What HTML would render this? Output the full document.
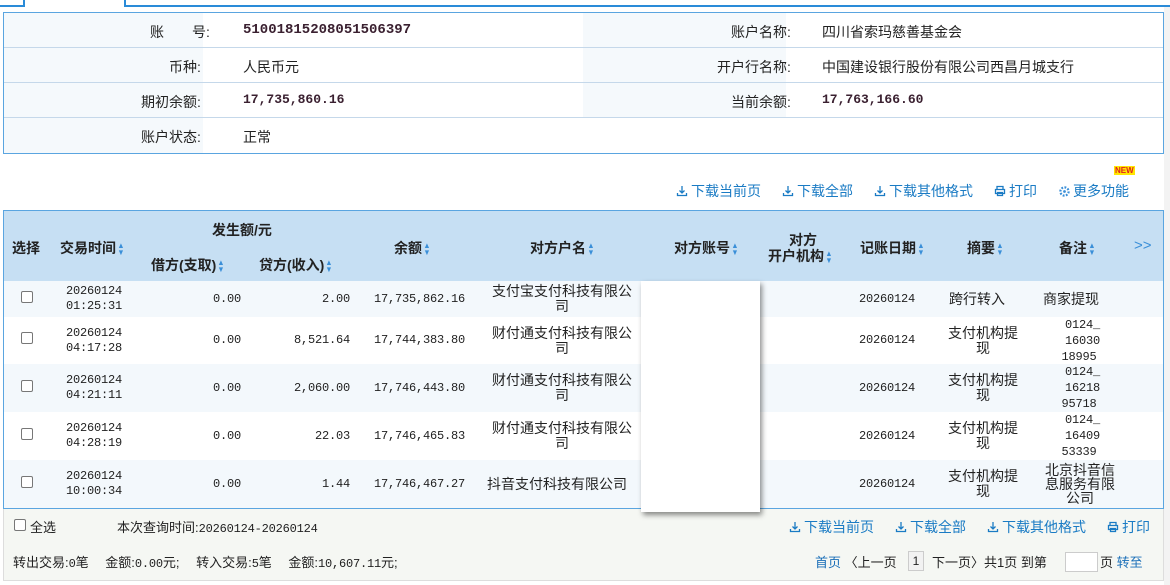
<!DOCTYPE html>
<html><head><meta charset="utf-8"><style>
*{margin:0;padding:0;box-sizing:border-box}
body{width:1170px;height:585px;position:relative;overflow:hidden;background:#fff;font-family:"Liberation Sans","Noto Sans CJK SC",sans-serif;font-size:14px;color:#222}
.a{position:absolute;white-space:nowrap}
.m{font-family:"Liberation Mono","Noto Sans CJK SC",monospace;font-size:12px;letter-spacing:-0.2px}
.lb{background:#f5f9fc}
.hl{position:absolute;height:1px;background:#c5d8ea}
.row{position:absolute;left:4px;width:1159px}
.c{position:absolute;top:0;height:100%;display:flex;align-items:center;line-height:15px}
.cb{position:absolute;width:12px;height:12px;border:1px solid #777;border-radius:2px;background:#fff}
.h{font-weight:bold;color:#222;font-size:14px}
.s{display:inline-flex;flex-direction:column;vertical-align:middle;color:#3a8fd8;font-size:8px;line-height:7px;margin-left:1px;transform:scaleX(0.9)}
.lk{color:#1a7bc4;font-size:14px}
.ic{display:inline-block;vertical-align:-1px;margin-right:3px}
</style></head><body>
<svg width="0" height="0" style="position:absolute"><defs>
<symbol id="dl" viewBox="0 0 12 12"><path d="M6 1v7M3.5 5.5L6 8l2.5-2.5M1.5 8v2.5h9V8" fill="none" stroke="#1a7bc4" stroke-width="1.3"/></symbol>
<symbol id="pr" viewBox="0 0 12 12"><path d="M3 4V1.5h6V4M1.5 4.5h9v4h-9zM3.5 7.5h5v3h-5z" fill="none" stroke="#1a7bc4" stroke-width="1.3"/></symbol>
</defs></svg>
<!-- tab -->
<div class="a" style="left:0;top:5px;width:24px;height:2px;background:#2a8bd8"></div>
<div class="a" style="left:23px;top:0;width:2px;height:7px;background:#2a8bd8"></div>
<div class="a" style="left:124px;top:0;width:2px;height:7px;background:#2a8bd8"></div>
<div class="a" style="left:124px;top:5px;width:1046px;height:2px;background:#2a8bd8"></div>
<div class="a" style="left:1164px;top:7px;width:6px;height:578px;background:#f3f3f3"></div>
<!-- info box -->
<div class="a" style="left:3px;top:12px;width:1161px;height:142px;border:1px solid #5aa5e0"></div>
<div class="a lb" style="left:4px;top:13px;width:199px;height:140px"></div>
<div class="a lb" style="left:583px;top:13px;width:203px;height:105px"></div>
<div class="hl" style="left:4px;top:47px;width:1159px"></div>
<div class="hl" style="left:4px;top:82px;width:1159px"></div>
<div class="hl" style="left:4px;top:117px;width:1159px"></div>
<div class="a" style="left:150px;top:22px">账　　号:</div>
<div class="a m" style="left:243px;top:22px;font-weight:bold;color:#3a2030;font-size:14px;letter-spacing:0">5100181520805150639​7</div>
<div class="a" style="left:169px;top:57px">币种:</div>
<div class="a" style="left:243px;top:57px">人民币元</div>
<div class="a" style="left:141px;top:92px">期初余额:</div>
<div class="a m" style="left:243px;top:92px;font-weight:bold;color:#3a2030;font-size:13px;letter-spacing:0">17,735,860.16</div>
<div class="a" style="left:141px;top:127px">账户状态:</div>
<div class="a" style="left:243px;top:127px">正常</div>
<div class="a" style="left:731px;top:22px">账户名称:</div>
<div class="a" style="left:822px;top:22px">四川省索玛慈善基金会</div>
<div class="a" style="left:717px;top:57px">开户行名称:</div>
<div class="a" style="left:822px;top:57px">中国建设银行股份有限公司西昌月城支行</div>
<div class="a" style="left:731px;top:92px">当前余额:</div>
<div class="a m" style="left:822px;top:92px;font-weight:bold;color:#3a2030;font-size:13px;letter-spacing:0">17,763,166.60</div>
<!-- toolbar -->
<div class="a lk" style="left:676px;top:181px"><svg class="ic" width="12" height="12"><use href="#dl"/></svg>下载当前页</div>
<div class="a lk" style="left:782px;top:181px"><svg class="ic" width="12" height="12"><use href="#dl"/></svg>下载全部</div>
<div class="a lk" style="left:874px;top:181px"><svg class="ic" width="12" height="12"><use href="#dl"/></svg>下载其他格式</div>
<div class="a lk" style="left:994px;top:181px"><svg class="ic" width="12" height="12"><use href="#pr"/></svg>打印</div>
<div class="a lk" style="left:1059px;top:181px"><svg class="ic" width="11" height="11" viewBox="0 0 12 12"><circle cx="6" cy="6" r="4.5" fill="none" stroke="#3a8fd8" stroke-width="2.4" stroke-dasharray="2 1.5"/><circle cx="6" cy="6" r="1.5" fill="#3a8fd8"/></svg>更多功能</div>
<div class="a" style="left:1114px;top:166px;font-size:8px;font-weight:bold;color:#e02020;background:#ffe600;line-height:9px;padding:0 1px">NEW</div>
<!-- table -->
<div class="a" style="left:3px;top:210px;width:1161px;height:299px;border:1px solid #5aa5e0"></div>
<div class="a" style="left:4px;top:211px;width:1159px;height:70px;background:#c6dff3"></div>
<div class="a h" style="left:12px;top:238px">选择</div>
<div class="a h" style="left:60px;top:238px">交易时间<span class="s"><i>▲</i><i>▼</i></span></div>
<div class="a h" style="left:212px;top:220px">发生额/元</div>
<div class="a h" style="left:151px;top:255px">借方(支取)<span class="s"><i>▲</i><i>▼</i></span></div>
<div class="a h" style="left:259px;top:255px">贷方(收入)<span class="s"><i>▲</i><i>▼</i></span></div>
<div class="a h" style="left:394px;top:238px">余额<span class="s"><i>▲</i><i>▼</i></span></div>
<div class="a h" style="left:530px;top:238px">对方户名<span class="s"><i>▲</i><i>▼</i></span></div>
<div class="a h" style="left:674px;top:238px">对方账号<span class="s"><i>▲</i><i>▼</i></span></div>
<div class="a h" style="left:789px;top:230px">对方</div>
<div class="a h" style="left:768px;top:246px">开户机构<span class="s"><i>▲</i><i>▼</i></span></div>
<div class="a h" style="left:860px;top:238px">记账日期<span class="s"><i>▲</i><i>▼</i></span></div>
<div class="a h" style="left:967px;top:238px">摘要<span class="s"><i>▲</i><i>▼</i></span></div>
<div class="a h" style="left:1059px;top:238px">备注<span class="s"><i>▲</i><i>▼</i></span></div>
<div class="a" style="left:1134px;top:237px;color:#3a8fd8;font-size:15px">&gt;&gt;</div>

<div class="row" style="top:281px;height:36px;background:#f3f8fc">
<div class="cb" style="left:17px;top:10px"></div>
<div class="c m" style="left:62px">20260124<br>01:25:31</div>
<div class="c m" style="right:922px">0.00</div>
<div class="c m" style="right:813px">2.00</div>
<div class="c m" style="right:698px">17,735,862.16</div>
<div class="c" style="left:487px;width:142px;justify-content:center;text-align:center;white-space:normal">支付宝支付科技有限公司</div>
<div class="c m" style="left:855px">20260124</div>
<div class="c" style="left:945px">跨行转入</div>
<div class="c" style="left:1039px">商家提现</div>
</div>
<div class="row" style="top:317px;height:47px;background:#fff">
<div class="cb" style="left:17px;top:15px"></div>
<div class="c m" style="left:62px">20260124<br>04:17:28</div>
<div class="c m" style="right:922px">0.00</div>
<div class="c m" style="right:813px">8,521.64</div>
<div class="c m" style="right:698px">17,744,383.80</div>
<div class="c" style="left:487px;width:142px;justify-content:center;text-align:center;white-space:normal">财付通支付科技有限公司</div>
<div class="c m" style="left:855px">20260124</div>
<div class="c" style="left:944px;width:70px;text-align:center;white-space:normal">支付机构提现</div>
<div class="c m" style="left:1037px;width:76px;justify-content:center;text-align:center;white-space:normal;line-height:16px">&nbsp;0124_<br>&nbsp;16030<br>18995</div>
</div>
<div class="row" style="top:364px;height:48px;background:#f3f8fc">
<div class="cb" style="left:17px;top:16px"></div>
<div class="c m" style="left:62px">20260124<br>04:21:11</div>
<div class="c m" style="right:922px">0.00</div>
<div class="c m" style="right:813px">2,060.00</div>
<div class="c m" style="right:698px">17,746,443.80</div>
<div class="c" style="left:487px;width:142px;justify-content:center;text-align:center;white-space:normal">财付通支付科技有限公司</div>
<div class="c m" style="left:855px">20260124</div>
<div class="c" style="left:944px;width:70px;text-align:center;white-space:normal">支付机构提现</div>
<div class="c m" style="left:1037px;width:76px;justify-content:center;text-align:center;white-space:normal;line-height:16px">&nbsp;0124_<br>&nbsp;16218<br>95718</div>
</div>
<div class="row" style="top:412px;height:48px;background:#fff">
<div class="cb" style="left:17px;top:16px"></div>
<div class="c m" style="left:62px">20260124<br>04:28:19</div>
<div class="c m" style="right:922px">0.00</div>
<div class="c m" style="right:813px">22.03</div>
<div class="c m" style="right:698px">17,746,465.83</div>
<div class="c" style="left:487px;width:142px;justify-content:center;text-align:center;white-space:normal">财付通支付科技有限公司</div>
<div class="c m" style="left:855px">20260124</div>
<div class="c" style="left:944px;width:70px;text-align:center;white-space:normal">支付机构提现</div>
<div class="c m" style="left:1037px;width:76px;justify-content:center;text-align:center;white-space:normal;line-height:16px">&nbsp;0124_<br>&nbsp;16409<br>53339</div>
</div>
<div class="row" style="top:460px;height:48px;background:#f3f8fc">
<div class="cb" style="left:17px;top:16px"></div>
<div class="c m" style="left:62px">20260124<br>10:00:34</div>
<div class="c m" style="right:922px">0.00</div>
<div class="c m" style="right:813px">1.44</div>
<div class="c m" style="right:698px">17,746,467.27</div>
<div class="c" style="left:483px">抖音支付科技有限公司</div>
<div class="c m" style="left:855px">20260124</div>
<div class="c" style="left:944px;width:70px;text-align:center;white-space:normal">支付机构提现</div>
<div class="c" style="left:1040px;width:72px;text-align:center;white-space:normal;line-height:14px">北京抖音信息服务有限公司</div>
</div>
<!-- footer -->
<div class="a" style="left:3px;top:509px;width:1161px;height:72px;background:#f5f7f3;border:1px solid #ddd;border-top:none"></div>
<div class="a" style="left:641px;top:281px;width:119px;height:231px;background:#fff;box-shadow:2px 3px 5px rgba(0,0,0,0.45)"></div>
<div class="cb" style="left:14px;top:519px"></div>
<div class="a" style="left:30px;top:517px;font-size:13px">全选</div>
<div class="a" style="left:117px;top:517px;font-size:13px">本次查询时间:<span class="m">20260124-20260124</span></div>
<div class="a lk" style="left:789px;top:517px"><svg class="ic" width="12" height="12"><use href="#dl"/></svg>下载当前页</div>
<div class="a lk" style="left:895px;top:517px"><svg class="ic" width="12" height="12"><use href="#dl"/></svg>下载全部</div>
<div class="a lk" style="left:987px;top:517px"><svg class="ic" width="12" height="12"><use href="#dl"/></svg>下载其他格式</div>
<div class="a lk" style="left:1107px;top:517px"><svg class="ic" width="12" height="12"><use href="#pr"/></svg>打印</div>
<div class="a" style="left:13px;top:552px;font-size:13px">转出交易:<span class="m">0</span>笔　 金额:<span class="m">0.00</span>元;　 转入交易:<span class="m">5</span>笔　 金额:<span class="m">10,607.11</span>元;</div>
<div class="a" style="left:815px;top:552px;font-size:13px"><span style="color:#1a6fb8">首页</span> 〈上一页 </div>
<div class="a" style="left:908px;top:551px;width:16px;height:20px;border:1px solid #ccc;background:#f2f2f2;font-size:12px;text-align:center;line-height:18px">1</div>
<div class="a" style="left:932px;top:552px;font-size:13px">下一页〉共1页 到第</div>
<div class="a" style="left:1065px;top:552px;width:33px;height:20px;border:1px solid #ccc;background:#fff"></div>
<div class="a" style="left:1100px;top:552px;font-size:13px">页 <span style="color:#1a6fb8">转至</span></div>
</body></html>
